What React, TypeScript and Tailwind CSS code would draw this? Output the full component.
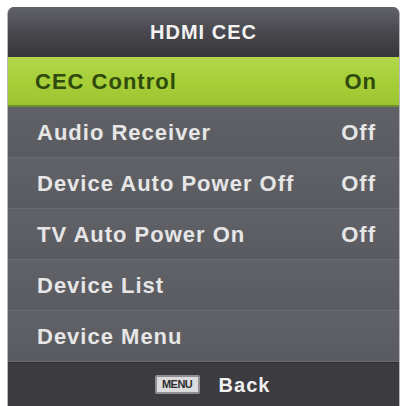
import React from 'react';

const rows: { label: string; value?: string; active?: boolean }[] = [
    { label: 'CEC Control', value: 'On', active: true },
    { label: 'Audio Receiver', value: 'Off' },
    { label: 'Device Auto Power Off', value: 'Off' },
    { label: 'TV Auto Power On', value: 'Off' },
    { label: 'Device List' },
    { label: 'Device Menu' },
];

export default function App() {
    return (
        <div className="w-[403px] h-[406px] bg-white pt-[7px] pl-[7px] pr-[3px] overflow-hidden font-['Liberation_Sans',Arial,sans-serif] font-bold">
            <div className="h-[399px] flex flex-col rounded-t-[7px] overflow-hidden border-l border-r border-[#b8b8bc] bg-[#5d5e63]">
                <div className="h-[50px] shrink-0 flex items-center justify-center bg-gradient-to-b from-[#62626a] via-[#48484e] to-[#36363b] text-[20px] tracking-[1px] text-[#f2f2f2] pb-[1px]">
                    HDMI CEC
                </div>
                {rows.map((r) =>
                    r.active ? (
                        <div
                            key={r.label}
                            className="h-[50px] shrink-0 flex items-center justify-between pl-[27px] pr-[22px] bg-gradient-to-b from-[#b2d84a] via-[#a6cf38] to-[#9cc532] border-b-2 border-[#6f8f2a] text-[22px] tracking-[1px] text-[#2f4a0c]"
                        >
                            <span>{r.label}</span>
                            <span>{r.value}</span>
                        </div>
                    ) : (
                        <div
                            key={r.label}
                            className="h-[51px] shrink-0 flex items-center justify-between pl-[29px] pr-[23px] bg-gradient-to-b from-[#616267] to-[#5a5b60] border-b border-[#6a6b70] text-[22px] tracking-[1px] text-[#e6e6e6]"
                        >
                            <span>{r.label}</span>
                            {r.value && <span>{r.value}</span>}
                        </div>
                    )
                )}
                <div className="flex-1 flex items-center justify-center gap-[19px] bg-[#3c3c40] border-t border-[#2e2e32] pl-[18px]">
                    <span className="w-[45px] h-[19px] flex items-center justify-center bg-[#dcdcde] border-2 border-[#909094] rounded-[2px] text-[11px] font-black tracking-[-0.5px] text-[#2e2e2e] leading-none">
                        MENU
                    </span>
                    <span className="text-[20px] tracking-[1px] text-[#f0f0f0]">Back</span>
                </div>
            </div>
        </div>
    );
}
